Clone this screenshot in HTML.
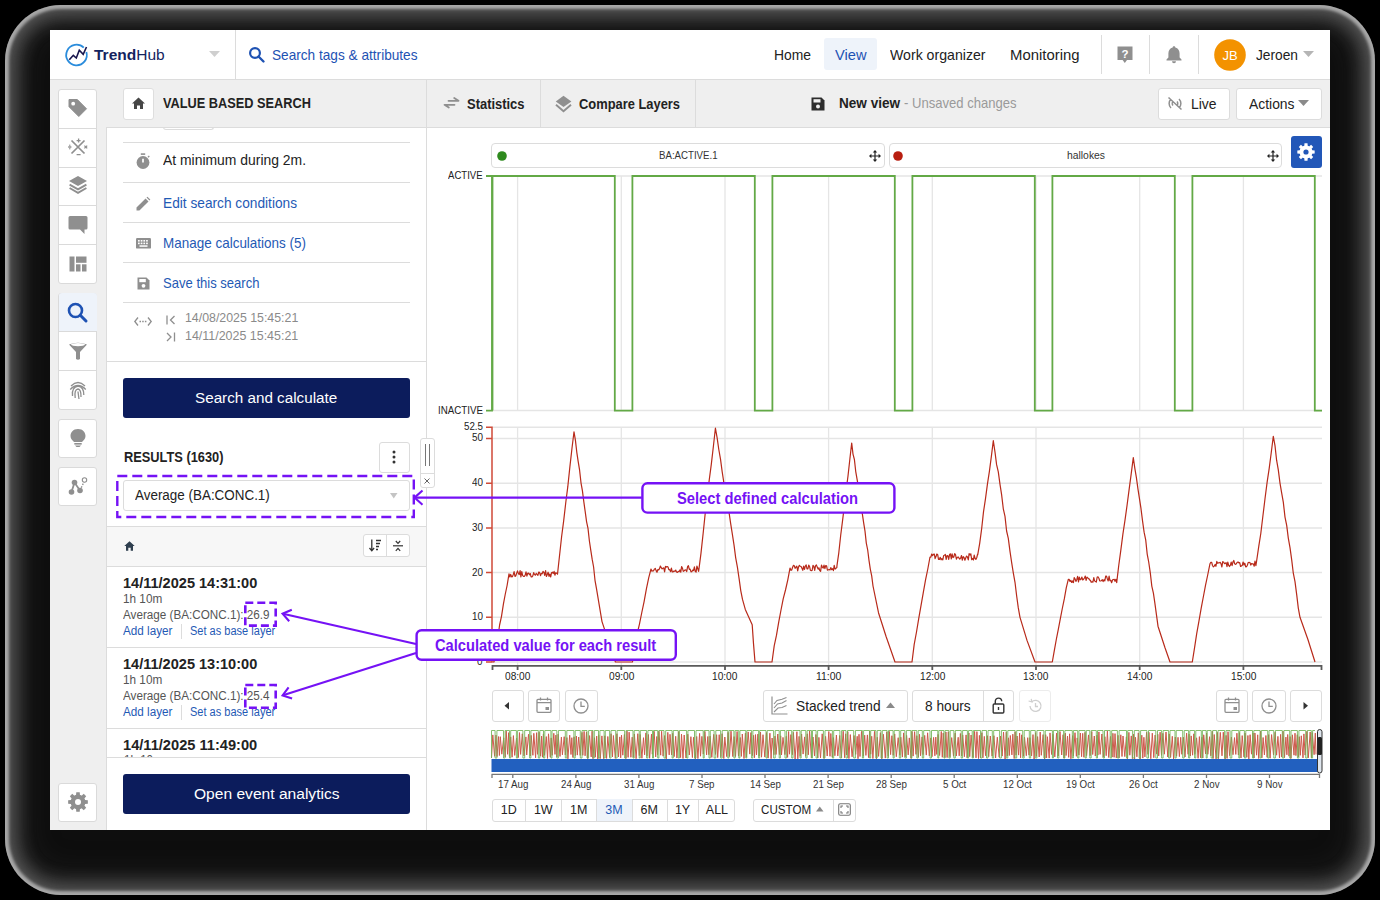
<!DOCTYPE html><html><head><meta charset="utf-8"><style>
*{box-sizing:border-box;margin:0;padding:0}
html,body{width:1380px;height:900px;overflow:hidden;background:#000;font-family:"Liberation Sans",sans-serif;color:#222;position:relative}
#shadow{position:absolute;left:5px;top:5px;width:1370px;height:890px;border-radius:56px;background:#0e0e0e;box-shadow:inset 0 0 3px 4px rgba(225,225,225,.6), inset 0 0 18px 12px rgba(150,150,150,.48), inset 0 0 34px 16px rgba(70,70,70,.35)}
#win{position:absolute;left:50px;top:30px;width:1280px;height:800px;background:#efefef}
.r{position:absolute}
.t{position:absolute;white-space:nowrap;line-height:1;transform-origin:0 0}
.bx{position:absolute;background:#fff;border:1px solid #dcdcdc;border-radius:3px}
svg{position:absolute;overflow:visible}
</style></head><body><div id="shadow"></div><div id="win"></div><div class="r" style="left:50px;top:30px;width:1280px;height:49px;background:#fff"></div>
<div class="r" style="left:50px;top:79px;width:1280px;height:1px;background:#dcdcdc"></div>
<div class="r" style="left:235px;top:30px;width:1px;height:49px;background:#dcdcdc"></div>
<svg style="left:64px;top:43px" width="26" height="26" viewBox="0 0 26 26"><path d="M22.35 8.99 A10.3 10.3 0 1 1 19.78 4.72" fill="none" stroke="#2a8cdc" stroke-width="1.8"/><path d="M5.3 16.8 L9.3 12.3 L12.3 15 L15.3 7.3 L19.2 11.3 L22.5 4" fill="none" stroke="#16144c" stroke-width="1.6" stroke-linejoin="miter"/></svg>
<div class="t" style="left:94px;top:46.88px;font-size:15.5px;color:#14235e;"><b>Trend</b>Hub</div>
<svg style="left:209px;top:51px" width="12" height="7" viewBox="0 0 12 7"><path d="M0 0 L11 0 L5.5 6 Z" fill="#cfcfcf"/></svg>
<svg style="left:249px;top:47px" width="17" height="16" viewBox="0 0 17 16"><circle cx="6" cy="6" r="4.9" fill="none" stroke="#1e52b3" stroke-width="2.2"/><path d="M9.5 9.5 L14.5 14.5" stroke="#1e52b3" stroke-width="2.4" stroke-linecap="round"/></svg>
<div class="t" style="left:271.5px;top:47.73px;font-size:14.5px;color:#1e52b3;transform:scaleX(0.9403);">Search tags &amp; attributes</div>
<div class="t" style="left:773.5px;top:47.53px;font-size:14.5px;color:#222;transform:scaleX(0.9567);">Home</div>
<div class="r" style="left:824px;top:38px;width:53px;height:32px;background:#eef3fa;border-radius:3px"></div>
<div class="t" style="left:835px;top:47.53px;font-size:14.5px;color:#1e52b3;transform:scaleX(1.0107);">View</div>
<div class="t" style="left:890px;top:47.53px;font-size:14.5px;color:#222;transform:scaleX(0.9741);">Work organizer</div>
<div class="t" style="left:1009.6px;top:47.53px;font-size:14.5px;color:#222;transform:scaleX(1.0267);">Monitoring</div>
<div class="r" style="left:1101px;top:35px;width:1px;height:39px;background:#dcdcdc"></div>
<div class="r" style="left:1149px;top:35px;width:1px;height:39px;background:#dcdcdc"></div>
<div class="r" style="left:1198px;top:35px;width:1px;height:39px;background:#dcdcdc"></div>
<svg style="left:1116px;top:46px" width="18" height="18" viewBox="0 0 18 18"><path d="M1.5 0.5 H16.5 V14 H11 L8.8 17 L6.6 14 H1.5 Z" fill="#8f8f8f"/><text x="9" y="12.3" font-size="11.5" font-weight="bold" text-anchor="middle" fill="#fff" font-family="Liberation Sans">?</text></svg>
<svg style="left:1165px;top:45px" width="18" height="19" viewBox="0 0 18 19"><path d="M9 1.2 C9.8 1.2 10.3 1.7 10.3 2.4 C13.2 3.1 14.6 5.6 14.6 8.5 V12.5 L16.5 14.6 V15.4 H1.5 V14.6 L3.4 12.5 V8.5 C3.4 5.6 4.8 3.1 7.7 2.4 C7.7 1.7 8.2 1.2 9 1.2 Z" fill="#8f8f8f"/><path d="M7 16.3 H11 A2 2 0 0 1 7 16.3 Z" fill="#8f8f8f"/></svg>
<svg style="left:1214px;top:39px" width="32" height="32" viewBox="0 0 32 32"><circle cx="16" cy="16" r="15.8" fill="#f39200"/><text x="16" y="21" font-size="13" text-anchor="middle" fill="#fff" font-family="Liberation Sans">JB</text></svg>
<div class="t" style="left:1256px;top:47.53px;font-size:14.5px;color:#222;transform:scaleX(0.9474);">Jeroen</div>
<svg style="left:1303px;top:51px" width="12" height="7" viewBox="0 0 12 7"><path d="M0 0 L11 0 L5.5 6 Z" fill="#b5b5b5"/></svg>
<div class="r" style="left:107px;top:127px;width:1223px;height:1px;background:#dcdcdc"></div>
<div class="r" style="left:122.5px;top:88px;width:31.2px;height:31.5px;background:#fff;border:1px solid #dedede;border-radius:3px;"></div>
<svg style="left:131px;top:96px" width="15" height="14" viewBox="0 0 15 14"><path d="M7.5 1.5 L14 7.5 H12 V13 H9 V9.5 H6 V13 H3 V7.5 H1 Z" fill="#474747"/></svg>
<div class="t" style="left:163px;top:95.16px;font-size:15.4px;color:#222;font-weight:bold;transform:scaleX(0.8289);">VALUE BASED SEARCH</div>
<div class="r" style="left:426px;top:79px;width:1px;height:751px;background:#dcdcdc"></div>
<div class="r" style="left:539.5px;top:79px;width:1px;height:48px;background:#dcdcdc"></div>
<div class="r" style="left:695px;top:79px;width:1px;height:48px;background:#dcdcdc"></div>
<svg style="left:442.5px;top:95px" width="18" height="15" viewBox="0 0 18 15"><path d="M5.5 5.8 H15.5 L11.2 3 M11.5 9.8 H1.5 L5.8 12.6" fill="none" stroke="#8f8f8f" stroke-width="1.8" stroke-linejoin="round" stroke-linecap="round"/></svg>
<div class="t" style="left:467px;top:97.13px;font-size:14.5px;color:#222;font-weight:bold;transform:scaleX(0.8919);">Statistics</div>
<svg style="left:555px;top:95px" width="17" height="17" viewBox="0 0 17 17"><path d="M8.5 0.8 L16.4 6.6 L8.5 12.1 L0.8 6.6 Z" fill="#8f8f8f"/><path d="M1 9.7 L8.5 16.3 L16 9.7" fill="none" stroke="#8f8f8f" stroke-width="1.9"/></svg>
<div class="t" style="left:579px;top:97.13px;font-size:14.5px;color:#222;font-weight:bold;transform:scaleX(0.8888);">Compare Layers</div>
<svg style="left:811px;top:97px" width="14" height="14" viewBox="0 0 14 14"><path d="M0.5 0.5 H10.5 L13.5 3.5 V13.5 H0.5 Z" fill="#2d2d2d"/><rect x="2.5" y="2.2" width="7" height="3.3" fill="#efefef"/><circle cx="7" cy="9.5" r="2" fill="#efefef"/></svg>
<div class="t" style="left:838.5px;top:95.53px;font-size:14.5px;color:#222;font-weight:bold;transform:scaleX(0.9345);">New view</div>
<div class="t" style="left:904px;top:95.53px;font-size:14.5px;color:#9a9a9a;transform:scaleX(0.9005);">- Unsaved changes</div>
<div class="r" style="left:1158px;top:88px;width:72px;height:32px;background:#fff;border:1px solid #dcdcdc;border-radius:3px;"></div>
<svg style="left:1167px;top:96px" width="16" height="15" viewBox="0 0 16 15"><path d="M4 3 C1.5 5.5 1.5 9.5 4 12 M12 3 C14.5 5.5 14.5 9.5 12 12 M6 5.5 C5 6.5 5 8.5 6 9.5 M10 5.5 C11 6.5 11 8.5 10 9.5 M1.5 1.5 L14.5 13.5" fill="none" stroke="#8f8f8f" stroke-width="1.5"/></svg>
<div class="t" style="left:1191px;top:96.53px;font-size:14.5px;color:#222;transform:scaleX(0.9587);">Live</div>
<div class="r" style="left:1236px;top:88px;width:85.5px;height:32px;background:#fff;border:1px solid #dcdcdc;border-radius:3px;"></div>
<div class="t" style="left:1249px;top:96.53px;font-size:14.5px;color:#222;transform:scaleX(0.9569);">Actions</div>
<svg style="left:1298px;top:100px" width="12" height="7" viewBox="0 0 12 7"><path d="M0 0 L11 0 L5.5 6 Z" fill="#8a8a8a"/></svg>
<div class="r" style="left:58px;top:89px;width:39.3px;height:195.0px;background:#fff;border:1px solid #dadada;border-radius:3px;"></div>
<div class="r" style="left:59px;top:127.8px;width:38px;height:1px;background:#dadada"></div>
<div class="r" style="left:59px;top:166.6px;width:38px;height:1px;background:#dadada"></div>
<div class="r" style="left:59px;top:205.39999999999998px;width:38px;height:1px;background:#dadada"></div>
<div class="r" style="left:59px;top:244.2px;width:38px;height:1px;background:#dadada"></div>
<div class="r" style="left:58px;top:292.5px;width:39.3px;height:117.39999999999999px;background:#fff;border:1px solid #dadada;border-radius:3px;"></div>
<div class="r" style="left:59px;top:331.3px;width:38px;height:1px;background:#dadada"></div>
<div class="r" style="left:59px;top:370.1px;width:38px;height:1px;background:#dadada"></div>
<div class="r" style="left:58px;top:418.5px;width:39.3px;height:39.8px;background:#fff;border:1px solid #dadada;border-radius:3px;"></div>
<div class="r" style="left:58px;top:466.5px;width:39.3px;height:39.8px;background:#fff;border:1px solid #dadada;border-radius:3px;"></div>
<div class="r" style="left:58px;top:782.5px;width:39.3px;height:39.8px;background:#fff;border:1px solid #dadada;border-radius:3px;"></div>
<svg style="left:68px;top:98px" width="20" height="20" viewBox="0 0 20 20"><path d="M1 1.5 H9.3 L18.5 10.8 L10.8 18.5 L1 8.7 Z" fill="#8f8f8f" stroke="#8f8f8f" stroke-width="1" stroke-linejoin="round"/><circle cx="5.2" cy="5.7" r="1.9" fill="#fff"/></svg>
<svg style="left:68px;top:137px" width="20" height="20" viewBox="0 0 20 20"><path d="M3.5 3.5 L16.5 16.5 M16.5 3.5 L3.5 16.5" stroke="#8f8f8f" stroke-width="1.7"/><path d="M10.6 1.6 V5.6 M8.6 3.6 H12.6 M8.6 17.6 H12.6 M0.2 10 H3.4 M16.4 8.6 L19.2 11.4 M19.2 8.6 L16.4 11.4" stroke="#8f8f8f" stroke-width="1.3"/><circle cx="1.8" cy="8.3" r=".7" fill="#8f8f8f"/><circle cx="1.8" cy="11.7" r=".7" fill="#8f8f8f"/></svg>
<svg style="left:68px;top:175px" width="20" height="20" viewBox="0 0 20 20"><path d="M10 1 L19 6 L10 11 L1 6 Z" fill="#8f8f8f"/><path d="M1.6 9.6 L10 14.4 L18.4 9.6 M1.6 13 L10 17.8 L18.4 13" fill="none" stroke="#8f8f8f" stroke-width="1.9"/></svg>
<svg style="left:67px;top:214px" width="22" height="22" viewBox="0 0 22 22"><path d="M3 2 H19 Q20.5 2 20.5 3.5 V14 Q20.5 15.5 19 15.5 H17.5 V20 L13 15.5 H3 Q1.5 15.5 1.5 14 V3.5 Q1.5 2 3 2 Z" fill="#8f8f8f"/></svg>
<svg style="left:68px;top:254px" width="20" height="20" viewBox="0 0 20 20"><rect x="1.5" y="2.5" width="5" height="15" fill="#8f8f8f"/><rect x="8" y="2.5" width="10.5" height="6.3" fill="#8f8f8f"/><rect x="8" y="10.3" width="4.5" height="7.2" fill="#8f8f8f"/><rect x="14" y="10.3" width="4.5" height="7.2" fill="#8f8f8f"/></svg>
<div class="r" style="left:59px;top:293px;width:38px;height:38px;background:#eef3fa;border-radius:3px 3px 0 0"></div>
<svg style="left:67px;top:302px" width="22" height="22" viewBox="0 0 22 22"><circle cx="8.5" cy="8.5" r="6.5" fill="none" stroke="#1e52b3" stroke-width="2.6"/><path d="M13.3 13.3 L19 19" stroke="#1e52b3" stroke-width="3" stroke-linecap="round"/></svg>
<svg style="left:68px;top:341px" width="20" height="20" viewBox="0 0 20 20"><path d="M1 3.5 Q10 0 19 3.5 L12 11 V18 Q10 19.5 8 18 V11 Z" fill="#8f8f8f"/><ellipse cx="10" cy="3.6" rx="7" ry="1.6" fill="#fff"/></svg>
<svg style="left:68px;top:380px" width="20" height="20" viewBox="0 0 20 20"><g fill="none" stroke="#8f8f8f" stroke-width="1.3"><path d="M3 6 Q10 -1 17 6"/><path d="M2.2 9.5 Q10 1.5 17.8 9.5"/><path d="M4.5 16 Q3.5 7 10 6 Q16 7 15.8 15"/><path d="M7.2 18 Q6 9.5 10 9 Q13.2 9.5 13 17"/><path d="M10 11.5 Q10.5 16 11 19"/></g></svg>
<svg style="left:68px;top:428px" width="20" height="20" viewBox="0 0 20 20"><path d="M10 1 C5 1 2.5 4.5 2.5 8 C2.5 11 4.5 12.5 6 14 H14 C15.5 12.5 17.5 11 17.5 8 C17.5 4.5 15 1 10 1 Z" fill="#8f8f8f"/><rect x="6.3" y="15" width="7.4" height="1.6" fill="#8f8f8f"/><path d="M7 17.5 H13 L11.5 19 H8.5 Z" fill="#8f8f8f"/></svg>
<svg style="left:68px;top:476px" width="20" height="20" viewBox="0 0 20 20"><path d="M3.5 16 L6.5 6.5 L12 14.5" fill="none" stroke="#8f8f8f" stroke-width="1.8"/><path d="M12 14.5 L16 6" fill="none" stroke="#8f8f8f" stroke-width="1.3" stroke-dasharray="1.6 1.4"/><circle cx="3.5" cy="16" r="2.8" fill="#8f8f8f"/><circle cx="6.5" cy="6.5" r="2.8" fill="#8f8f8f"/><circle cx="12" cy="14.5" r="2.8" fill="#8f8f8f"/><circle cx="16.5" cy="4" r="2.2" fill="#fff" stroke="#8f8f8f" stroke-width="1.1"/></svg>
<svg style="left:67px;top:791px" width="22" height="22" viewBox="0 0 22 22"><polygon points="18.04,9.05 20.85,9.28 20.85,12.72 18.04,12.95 17.35,14.60 19.18,16.75 16.75,19.18 14.60,17.35 12.95,18.04 12.72,20.85 9.28,20.85 9.05,18.04 7.40,17.35 5.25,19.18 2.82,16.75 4.65,14.60 3.96,12.95 1.15,12.72 1.15,9.28 3.96,9.05 4.65,7.40 2.82,5.25 5.25,2.82 7.40,4.65 9.05,3.96 9.28,1.15 12.72,1.15 12.95,3.96 14.60,4.65 16.75,2.82 19.18,5.25 17.35,7.40" fill="#8f8f8f"/><circle cx="11" cy="11" r="7.15" fill="#8f8f8f"/><circle cx="11" cy="11" r="3" fill="#fff"/></svg>
<div class="r" style="left:107px;top:128px;width:319px;height:702px;background:#fff"></div>
<div class="r" style="left:106px;top:127px;width:1px;height:703px;background:#dcdcdc"></div>
<div class="r" style="left:163px;top:127px;width:51px;height:3px;border:1px solid #dcdcdc;border-top:none;border-radius:0 0 3px 3px"></div>
<div class="r" style="left:123px;top:142px;width:287px;height:1px;background:#dcdcdc"></div>
<div class="r" style="left:123px;top:182px;width:287px;height:1px;background:#dcdcdc"></div>
<div class="r" style="left:123px;top:222px;width:287px;height:1px;background:#dcdcdc"></div>
<div class="r" style="left:123px;top:262px;width:287px;height:1px;background:#dcdcdc"></div>
<div class="r" style="left:123px;top:302px;width:287px;height:1px;background:#dcdcdc"></div>
<svg style="left:136px;top:153px" width="14" height="16" viewBox="0 0 14 16"><rect x="4.8" y="0.3" width="4.4" height="1.6" fill="#8f8f8f"/><circle cx="7" cy="9.5" r="6.4" fill="#8f8f8f"/><path d="M12 4.3 L13.3 3" stroke="#8f8f8f" stroke-width="1.3"/><path d="M7 5.8 V9.6" stroke="#fff" stroke-width="1.7"/></svg>
<div class="t" style="left:163px;top:152.73px;font-size:14.5px;color:#222;transform:scaleX(0.9593);">At minimum during 2m.</div>
<svg style="left:136px;top:197px" width="14" height="14" viewBox="0 0 14 14"><path d="M0.5 13.5 V10.6 L9.6 1.5 L12.5 4.4 L3.4 13.5 Z" fill="#8f8f8f"/><path d="M10.5 0.6 L11.4 -0.3 L14.3 2.6 L13.4 3.5 Z" fill="#8f8f8f"/></svg>
<div class="t" style="left:163.3px;top:195.53px;font-size:14.5px;color:#1f5ab5;transform:scaleX(0.9447);">Edit search conditions</div>
<svg style="left:135.5px;top:238px" width="15" height="11" viewBox="0 0 15 11"><rect x="0" y="0" width="15" height="10.6" rx="1.2" fill="#8f8f8f"/><g fill="#fff"><rect x="2" y="2" width="1.7" height="1.6"/><rect x="4.7" y="2" width="1.7" height="1.6"/><rect x="7.4" y="2" width="1.7" height="1.6"/><rect x="10.1" y="2" width="1.7" height="1.6"/><rect x="2" y="4.6" width="1.7" height="1.6"/><rect x="4.7" y="4.6" width="1.7" height="1.6"/><rect x="7.4" y="4.6" width="1.7" height="1.6"/><rect x="10.1" y="4.6" width="1.7" height="1.6"/><rect x="3.5" y="7.3" width="8" height="1.5"/></g></svg>
<div class="t" style="left:163.3px;top:235.73px;font-size:14.5px;color:#1f5ab5;transform:scaleX(0.9290);">Manage calculations (5)</div>
<svg style="left:136.5px;top:277px" width="13" height="13" viewBox="0 0 13 13"><path d="M0.5 0.5 H9.5 L12.5 3.5 V12.5 H0.5 Z" fill="#8f8f8f"/><rect x="2.3" y="2" width="6.5" height="3.2" fill="#fff"/><circle cx="6.5" cy="8.8" r="1.9" fill="#fff"/></svg>
<div class="t" style="left:163.3px;top:276.03px;font-size:14.5px;color:#1f5ab5;transform:scaleX(0.9003);">Save this search</div>
<svg style="left:134px;top:316px" width="18" height="11" viewBox="0 0 18 11"><path d="M4 1.5 L0.8 5.5 L4 9.5 M14 1.5 L17.2 5.5 L14 9.5" fill="none" stroke="#8f8f8f" stroke-width="1.3"/><path d="M5.5 5.5 H12.5" stroke="#8f8f8f" stroke-width="1.3" stroke-dasharray="1.5 1.2"/></svg>
<svg style="left:166px;top:315px" width="10" height="10" viewBox="0 0 10 10"><path d="M1 0.5 V9.5 M8.5 1 L4.5 5 L8.5 9" fill="none" stroke="#8f8f8f" stroke-width="1.3"/></svg>
<svg style="left:166px;top:332px" width="10" height="10" viewBox="0 0 10 10"><path d="M8.5 0.5 V9.5 M1 1 L5 5 L1 9" fill="none" stroke="#8f8f8f" stroke-width="1.3"/></svg>
<div class="t" style="left:184.7px;top:312.33px;font-size:12.6px;color:#8a8a8a;transform:scaleX(0.9801);">14/08/2025 15:45:21</div>
<div class="t" style="left:184.7px;top:329.63px;font-size:12.6px;color:#8a8a8a;transform:scaleX(0.9881);">14/11/2025 15:45:21</div>
<div class="r" style="left:107px;top:361px;width:319px;height:1px;background:#dcdcdc"></div>
<div class="r" style="left:123px;top:378px;width:287px;height:40px;background:#0c1c5c;border-radius:3px"></div>
<div class="t" style="left:195.3px;top:390.48px;font-size:15.5px;color:#fff;transform:scaleX(0.9824);">Search and calculate</div>
<div class="t" style="left:123.5px;top:450.03px;font-size:14.5px;color:#222;font-weight:bold;transform:scaleX(0.8842);">RESULTS (1630)</div>
<div class="r" style="left:378.5px;top:441.5px;width:31.5px;height:31px;background:#fff;border:1px solid #dcdcdc;border-radius:3px;"></div>
<svg style="left:392px;top:450px" width="4" height="14" viewBox="0 0 4 14"><circle cx="2" cy="2" r="1.5" fill="#333"/><circle cx="2" cy="7" r="1.5" fill="#333"/><circle cx="2" cy="12" r="1.5" fill="#333"/></svg>
<div class="r" style="left:123.2px;top:480.2px;width:286.5px;height:31.2px;background:#fff;border:1px solid #dcdcdc;border-radius:3px;"></div>
<div class="t" style="left:134.8px;top:488.05px;font-size:14px;color:#222;transform:scaleX(0.9590);">Average (BA:CONC.1)</div>
<svg style="left:390px;top:493px" width="8" height="6" viewBox="0 0 8 6"><path d="M0 0 H7.5 L3.75 5.5 Z" fill="#c4c4c4"/></svg>
<div class="r" style="left:107px;top:526px;width:319px;height:41px;background:#f7f7f7;border-top:1px solid #dcdcdc;border-bottom:1px solid #dcdcdc"></div>
<svg style="left:123.5px;top:541px" width="11" height="10" viewBox="0 0 11 10"><path d="M5.5 0.3 L10.7 5 H9 V9.7 H6.7 V6.7 H4.3 V9.7 H2 V5 H0.3 Z" fill="#2f3f4f"/></svg>
<div class="r" style="left:363.2px;top:534.4px;width:46.5px;height:23px;background:#fff;border:1px solid #dcdcdc;border-radius:3px;"></div>
<div class="r" style="left:386px;top:535px;width:1px;height:22px;background:#dcdcdc"></div>
<svg style="left:369px;top:539px" width="13" height="13" viewBox="0 0 13 13"><path d="M2.8 0.5 V11.5 M0.5 9 L2.8 11.8 L5.1 9" fill="none" stroke="#333" stroke-width="1.3"/><path d="M7 1.5 H12 M7 4.5 H11 M7 7.5 H10 M7 10.5 H9" stroke="#333" stroke-width="1.3"/></svg>
<svg style="left:392px;top:540px" width="12" height="12" viewBox="0 0 12 12"><path d="M1 5.8 H11" stroke="#333" stroke-width="1.2"/><path d="M3.8 1 L6 3.4 L8.2 1 M3.8 10.8 L6 8.4 L8.2 10.8" fill="none" stroke="#333" stroke-width="1.2"/></svg>
<div class="t" style="left:122.8px;top:575.65px;font-size:14px;color:#222;font-weight:bold;transform:scaleX(1.0386);">14/11/2025 14:31:00</div>
<div class="t" style="left:122.8px;top:593.12px;font-size:12.5px;color:#555;transform:scaleX(0.9403);">1h 10m</div>
<div class="t" style="left:122.8px;top:608.82px;font-size:12.5px;color:#555;transform:scaleX(0.9351);">Average (BA:CONC.1): 26.9</div>
<div class="t" style="left:122.8px;top:625.32px;font-size:12.5px;color:#1f5ab5;transform:scaleX(0.9355);">Add layer</div>
<div class="r" style="left:181px;top:623.5px;width:1px;height:15.0px;background:#dcdcdc"></div>
<div class="t" style="left:190px;top:625.32px;font-size:12.5px;color:#1f5ab5;transform:scaleX(0.8822);">Set as base layer</div>
<div class="r" style="left:107px;top:647px;width:319px;height:1px;background:#dcdcdc"></div>
<div class="t" style="left:122.8px;top:656.75px;font-size:14px;color:#222;font-weight:bold;transform:scaleX(1.0386);">14/11/2025 13:10:00</div>
<div class="t" style="left:122.8px;top:674.22px;font-size:12.5px;color:#555;transform:scaleX(0.9403);">1h 10m</div>
<div class="t" style="left:122.8px;top:689.92px;font-size:12.5px;color:#555;transform:scaleX(0.9351);">Average (BA:CONC.1): 25.4</div>
<div class="t" style="left:122.8px;top:706.42px;font-size:12.5px;color:#1f5ab5;transform:scaleX(0.9355);">Add layer</div>
<div class="r" style="left:181px;top:704.6px;width:1px;height:15.0px;background:#dcdcdc"></div>
<div class="t" style="left:190px;top:706.42px;font-size:12.5px;color:#1f5ab5;transform:scaleX(0.8822);">Set as base layer</div>
<div class="r" style="left:107px;top:728px;width:319px;height:1px;background:#dcdcdc"></div>
<div class="t" style="left:122.8px;top:737.65px;font-size:14px;color:#222;font-weight:bold;transform:scaleX(1.0448);">14/11/2025 11:49:00</div>
<div class="t" style="left:123.5px;top:754.42px;font-size:12.5px;color:#555;transform:scaleX(0.9283);clip-path:inset(0 0 7px 0)">1h 10m</div>
<div class="r" style="left:107px;top:757px;width:319px;height:73px;background:#fff;border-top:1px solid #dcdcdc"></div>
<div class="r" style="left:123px;top:774px;width:287px;height:40px;background:#0c1c5c;border-radius:3px"></div>
<div class="t" style="left:193.6px;top:786.38px;font-size:15.5px;color:#fff;transform:scaleX(1.0052);">Open event analytics</div>
<div class="r" style="left:427px;top:128px;width:903px;height:702px;background:#fff"></div>
<div class="r" style="left:419.5px;top:437.5px;width:15px;height:50px;background:#fff;border:1px solid #dcdcdc;border-radius:3px;"></div>
<div class="r" style="left:420px;top:472.5px;width:14px;height:1px;background:#dcdcdc"></div>
<div class="r" style="left:425px;top:444px;width:1px;height:22px;background:#777"></div>
<div class="r" style="left:428.5px;top:444px;width:1px;height:22px;background:#777"></div>
<svg style="left:423.5px;top:477.5px" width="6" height="6" viewBox="0 0 6 6"><path d="M0.5 0.5 L5.5 5.5 M5.5 0.5 L0.5 5.5" stroke="#666" stroke-width="1"/></svg>
<div class="r" style="left:1290.5px;top:136px;width:31.5px;height:31.7px;background:#2257b8;border-radius:3px"></div>
<svg style="left:1296px;top:142px" width="20" height="20" viewBox="0 0 20 20"><polygon points="16.17,8.29 18.67,8.49 18.67,11.51 16.17,11.71 15.57,13.15 17.20,15.06 15.06,17.20 13.15,15.57 11.71,16.17 11.51,18.67 8.49,18.67 8.29,16.17 6.85,15.57 4.94,17.20 2.80,15.06 4.43,13.15 3.83,11.71 1.33,11.51 1.33,8.49 3.83,8.29 4.43,6.85 2.80,4.94 4.94,2.80 6.85,4.43 8.29,3.83 8.49,1.33 11.51,1.33 11.71,3.83 13.15,4.43 15.06,2.80 17.20,4.94 15.57,6.85" fill="#fff"/><circle cx="10" cy="10" r="6.27" fill="#fff"/><circle cx="10" cy="10" r="2.6" fill="#2257b8"/></svg>
<div class="r" style="left:491.4px;top:143px;width:393.6px;height:24.8px;background:#fff;border:1px solid #dcdcdc;border-radius:4px;"></div>
<svg style="left:496.5px;top:150.5px" width="10" height="10" viewBox="0 0 10 10"><circle cx="5" cy="5" r="4.8" fill="#2e8a1e"/></svg>
<div class="t" style="left:658.95px;top:150.07px;font-size:11.5px;color:#333;transform:scaleX(0.8398);">BA:ACTIVE.1</div>
<svg style="left:869px;top:150px" width="12" height="12" viewBox="0 0 12 12"><path d="M6 1 V11 M1 6 H11" stroke="#222" stroke-width="1.2"/><path d="M6 0 L8.2 2.4 H3.8 Z M6 12 L8.2 9.6 H3.8 Z M0 6 L2.4 3.8 V8.2 Z M12 6 L9.6 3.8 V8.2 Z" fill="#222"/></svg>
<div class="r" style="left:889px;top:143px;width:393.3px;height:24.8px;background:#fff;border:1px solid #dcdcdc;border-radius:4px;"></div>
<svg style="left:893px;top:150.5px" width="10" height="10" viewBox="0 0 10 10"><circle cx="5" cy="5" r="4.8" fill="#b81e10"/></svg>
<div class="t" style="left:1066.5px;top:150.07px;font-size:11.5px;color:#333;transform:scaleX(0.9007);">hallokes</div>
<svg style="left:1266.8px;top:150px" width="12" height="12" viewBox="0 0 12 12"><path d="M6 1 V11 M1 6 H11" stroke="#222" stroke-width="1.2"/><path d="M6 0 L8.2 2.4 H3.8 Z M6 12 L8.2 9.6 H3.8 Z M0 6 L2.4 3.8 V8.2 Z M12 6 L9.6 3.8 V8.2 Z" fill="#222"/></svg>
<svg style="left:0;top:0" width="1380" height="900" viewBox="0 0 1380 900"><path d="M491.5 176 H1322 M491.5 410.6 H1322" stroke="#e5e5e5" stroke-width="1.5"/><path d="M517.6 176 V410.6" stroke="#e5e5e5" stroke-width="1.3"/><path d="M621.3 176 V410.6" stroke="#e5e5e5" stroke-width="1.3"/><path d="M725.0 176 V410.6" stroke="#e5e5e5" stroke-width="1.3"/><path d="M828.6 176 V410.6" stroke="#e5e5e5" stroke-width="1.3"/><path d="M932.3 176 V410.6" stroke="#e5e5e5" stroke-width="1.3"/><path d="M1036.0 176 V410.6" stroke="#e5e5e5" stroke-width="1.3"/><path d="M1139.7 176 V410.6" stroke="#e5e5e5" stroke-width="1.3"/><path d="M1243.4 176 V410.6" stroke="#e5e5e5" stroke-width="1.3"/><path d="M491.5 427.3 H1322" stroke="#e5e5e5" stroke-width="1.5"/><path d="M491.5 438.5 H1322" stroke="#e5e5e5" stroke-width="1.5"/><path d="M491.5 483.2 H1322" stroke="#e5e5e5" stroke-width="1.5"/><path d="M491.5 527.9 H1322" stroke="#e5e5e5" stroke-width="1.5"/><path d="M491.5 572.6 H1322" stroke="#e5e5e5" stroke-width="1.5"/><path d="M491.5 617.3 H1322" stroke="#e5e5e5" stroke-width="1.5"/><path d="M491.5 662.0 H1322" stroke="#e5e5e5" stroke-width="1.5"/><path d="M517.6 427 V665" stroke="#e5e5e5" stroke-width="1.3"/><path d="M621.3 427 V665" stroke="#e5e5e5" stroke-width="1.3"/><path d="M725.0 427 V665" stroke="#e5e5e5" stroke-width="1.3"/><path d="M828.6 427 V665" stroke="#e5e5e5" stroke-width="1.3"/><path d="M932.3 427 V665" stroke="#e5e5e5" stroke-width="1.3"/><path d="M1036.0 427 V665" stroke="#e5e5e5" stroke-width="1.3"/><path d="M1139.7 427 V665" stroke="#e5e5e5" stroke-width="1.3"/><path d="M1243.4 427 V665" stroke="#e5e5e5" stroke-width="1.3"/><path d="M492.5 410.6 V176 H614.8 V410.6 H632.4 V176 H754.8 V410.6 H772.4 V176 H894.8 V410.6 H912.4 V176 H1034.8 V410.6 H1052.3999999999999 V176 H1174.8 V410.6 H1192.3999999999999 V176 H1314.8 V410.6 H1322" fill="none" stroke="#63a946" stroke-width="1.8"/><path d="M492.0 175 V411.6 M486 176 H492.5 M486 410.6 H492.5" stroke="#63a946" stroke-width="1.8"/><path d="M492.5 662.0 L494.0 662.0 L495.9 649.1 L497.8 638.0 L499.6 625.0 L501.5 616.3 L503.4 604.2 L505.2 594.5 L507.1 585.5 L509.0 573.9 L509.9 577.0 L510.7 574.4 L511.6 576.8 L512.4 576.7 L513.3 574.4 L514.1 571.7 L515.0 576.5 L515.8 575.8 L516.7 573.1 L517.5 570.9 L518.4 573.4 L519.2 574.6 L520.1 570.7 L520.9 577.0 L521.8 571.5 L522.6 575.4 L523.5 576.3 L524.3 576.5 L525.2 575.2 L526.0 571.8 L526.9 576.1 L527.7 573.4 L528.6 573.0 L529.4 574.8 L530.3 573.6 L531.1 576.9 L532.0 576.9 L532.8 575.9 L533.7 572.7 L534.5 574.4 L535.4 575.2 L536.2 573.4 L537.1 574.3 L537.9 575.3 L538.8 572.0 L539.6 572.6 L540.5 575.7 L541.3 573.4 L542.2 573.8 L543.0 571.4 L543.9 572.4 L544.7 575.4 L545.6 570.7 L546.4 576.5 L547.3 574.5 L548.1 572.2 L549.0 576.3 L549.8 574.0 L550.7 577.0 L551.5 572.8 L552.4 572.2 L553.2 573.5 L554.1 571.4 L554.9 575.2 L555.8 572.6 L556.6 573.3 L557.5 573.4 L557.5 574.2 L559.6 555.0 L561.6 536.8 L563.7 520.7 L565.8 502.3 L567.8 486.7 L569.9 466.6 L571.9 449.0 L574.0 431.8 L575.4 440.1 L576.8 452.3 L578.2 461.6 L579.6 470.2 L581.0 482.8 L582.4 490.6 L583.8 501.7 L585.2 511.7 L586.6 521.8 L588.0 528.4 L589.4 541.0 L590.8 550.3 L592.2 559.4 L593.6 567.0 L595.0 580.3 L596.4 588.2 L602.0 621.6 L605.4 631.9 L615.4 662.0 L632.5 662.0 L634.8 646.5 L637.1 634.0 L639.4 624.3 L641.8 612.5 L644.1 601.6 L646.4 588.9 L648.7 577.9 L651.0 569.0 L651.9 571.2 L652.7 570.8 L653.6 570.8 L654.4 569.1 L655.3 568.4 L656.1 570.6 L657.0 572.3 L657.8 569.6 L658.7 569.9 L659.5 568.6 L660.4 566.0 L661.2 567.7 L662.1 568.9 L662.9 568.2 L663.8 567.8 L664.6 572.0 L665.5 566.3 L666.3 567.1 L667.2 566.5 L668.0 567.0 L668.9 569.7 L669.7 569.7 L670.6 571.7 L671.4 568.1 L672.3 572.0 L673.1 571.9 L674.0 571.0 L674.8 571.3 L675.7 570.1 L676.5 572.0 L677.4 572.4 L678.2 571.4 L679.1 571.7 L679.9 569.9 L680.8 572.2 L681.6 566.5 L682.5 568.3 L683.3 571.4 L684.2 570.7 L685.0 570.0 L685.9 569.9 L686.7 571.6 L687.6 566.7 L688.4 565.7 L689.3 569.3 L690.1 569.1 L691.0 571.8 L691.8 571.7 L692.7 570.1 L693.5 570.6 L694.4 566.8 L695.2 571.3 L696.1 572.2 L696.9 566.0 L697.8 568.8 L698.6 571.4 L699.0 568.7 L701.0 553.1 L703.1 533.7 L705.1 514.5 L707.2 497.3 L709.2 480.3 L711.3 464.3 L713.4 446.3 L715.4 428.2 L717.1 437.7 L718.8 449.5 L720.5 459.1 L722.2 471.8 L723.9 483.0 L725.6 491.0 L727.3 501.0 L729.0 512.2 L730.6 523.2 L732.3 533.8 L734.0 544.8 L735.7 557.8 L737.4 567.2 L739.1 578.7 L740.8 590.8 L742.5 599.4 L745.3 609.4 L752.2 624.7 L753.5 643.6 L755.0 662.0 L772.0 662.0 L774.2 645.9 L776.5 635.2 L778.8 621.6 L781.0 610.0 L783.2 598.9 L785.5 590.0 L787.8 579.8 L790.0 568.1 L790.9 570.2 L791.7 570.1 L792.6 567.3 L793.4 565.4 L794.3 565.8 L795.1 568.3 L796.0 567.1 L796.8 566.1 L797.7 570.9 L798.5 567.1 L799.4 565.4 L800.2 566.2 L801.1 566.5 L801.9 568.3 L802.8 570.3 L803.6 566.2 L804.5 569.3 L805.3 566.1 L806.2 565.0 L807.0 568.8 L807.9 568.8 L808.7 565.1 L809.6 566.6 L810.4 570.3 L811.3 570.6 L812.1 570.5 L813.0 565.4 L813.8 566.1 L814.7 570.5 L815.5 565.9 L816.4 564.9 L817.2 567.1 L818.1 569.1 L818.9 567.8 L819.8 570.6 L820.6 571.4 L821.5 565.0 L822.3 567.1 L823.2 568.0 L824.0 565.2 L824.9 568.6 L825.7 565.6 L826.6 565.9 L827.4 570.1 L828.3 569.8 L829.1 569.5 L830.0 569.9 L830.8 567.6 L831.7 569.7 L832.5 568.7 L833.4 570.6 L834.2 565.4 L835.1 569.1 L835.9 568.4 L836.8 567.6 L837.0 565.4 L838.8 552.8 L840.7 535.3 L842.5 521.2 L844.4 505.4 L846.2 489.8 L848.0 476.0 L849.9 458.8 L851.7 443.0 L853.0 454.1 L854.4 459.5 L855.7 471.3 L857.0 478.8 L858.4 486.7 L859.7 496.4 L861.0 506.3 L862.4 514.4 L863.7 523.2 L865.0 531.1 L866.3 543.1 L867.7 550.0 L869.0 560.3 L870.3 569.1 L871.7 575.9 L873.0 586.0 L878.5 612.7 L886.0 636.3 L895.0 662.0 L912.0 662.0 L914.2 644.4 L916.5 632.0 L918.8 618.1 L921.0 605.7 L923.2 593.1 L925.5 580.2 L927.8 569.0 L930.0 557.0 L930.9 557.1 L931.7 554.0 L932.6 555.6 L933.4 554.4 L934.3 554.0 L935.1 558.6 L936.0 556.6 L936.8 554.0 L937.7 554.7 L938.5 559.4 L939.4 559.5 L940.2 557.3 L941.1 559.8 L941.9 558.7 L942.8 559.8 L943.6 555.8 L944.5 555.1 L945.3 554.3 L946.2 559.3 L947.0 555.5 L947.9 555.9 L948.7 559.3 L949.6 554.4 L950.4 553.8 L951.3 558.8 L952.1 553.9 L953.0 557.6 L953.8 557.0 L954.7 553.7 L955.5 554.7 L956.4 559.2 L957.2 557.4 L958.1 556.9 L958.9 558.0 L959.8 559.0 L960.6 558.2 L961.5 555.5 L962.3 560.2 L963.2 556.6 L964.0 557.4 L964.9 560.2 L965.7 558.1 L966.6 556.1 L967.4 556.9 L968.3 559.9 L969.1 553.7 L970.0 555.0 L970.8 553.8 L971.7 559.6 L972.5 558.5 L973.4 560.0 L974.2 555.1 L975.1 558.5 L975.9 559.4 L976.8 557.5 L977.6 554.2 L977.7 554.8 L979.7 543.3 L981.6 529.2 L983.5 511.9 L985.5 498.6 L987.5 483.6 L989.4 471.3 L991.3 456.8 L993.3 440.7 L995.0 452.1 L996.6 464.7 L998.3 471.9 L1000.0 484.3 L1001.6 494.6 L1003.3 508.8 L1005.0 516.4 L1006.6 531.0 L1008.3 538.4 L1010.0 551.3 L1011.7 562.8 L1013.3 572.9 L1015.0 582.3 L1016.7 596.3 L1018.3 607.9 L1020.0 617.3 L1027.0 640.4 L1035.0 662.0 L1052.3 662.0 L1054.3 650.7 L1056.3 639.5 L1058.3 629.4 L1060.3 618.8 L1062.3 608.5 L1064.3 598.9 L1066.3 587.7 L1068.3 579.3 L1069.1 579.3 L1070.0 581.5 L1070.8 580.3 L1071.7 582.5 L1072.5 581.0 L1073.4 582.6 L1074.2 577.7 L1075.1 579.0 L1075.9 581.4 L1076.8 579.5 L1077.6 576.4 L1078.5 581.9 L1079.3 577.2 L1080.2 579.8 L1081.0 579.3 L1081.9 577.1 L1082.7 580.0 L1083.6 579.3 L1084.4 578.0 L1085.3 576.1 L1086.1 580.4 L1087.0 577.1 L1087.8 577.9 L1088.7 578.4 L1089.5 579.9 L1090.4 580.3 L1091.2 582.3 L1092.1 581.8 L1092.9 582.2 L1093.8 577.7 L1094.6 580.9 L1095.5 581.6 L1096.3 582.1 L1097.2 577.0 L1098.0 576.8 L1098.9 578.2 L1099.7 580.8 L1100.6 581.0 L1101.4 580.7 L1102.3 579.6 L1103.1 581.6 L1104.0 579.7 L1104.8 580.9 L1105.7 576.2 L1106.5 576.1 L1107.4 579.0 L1108.2 581.0 L1109.1 576.2 L1109.9 580.6 L1110.8 580.3 L1111.6 582.7 L1112.5 580.1 L1113.3 579.5 L1114.2 579.3 L1115.0 581.3 L1115.9 579.3 L1116.7 582.6 L1118.8 565.0 L1120.8 550.4 L1122.9 534.1 L1125.0 520.2 L1127.1 505.0 L1129.2 488.8 L1131.2 473.9 L1133.3 457.7 L1134.8 468.1 L1136.4 477.7 L1137.9 488.6 L1139.5 498.9 L1141.0 508.7 L1142.6 521.4 L1144.1 532.2 L1145.7 539.8 L1147.2 554.1 L1148.7 562.0 L1150.3 572.9 L1151.8 586.1 L1153.4 593.1 L1154.9 603.4 L1156.5 615.1 L1158.0 626.2 L1165.0 647.8 L1170.0 662.0 L1192.3 662.0 L1194.5 648.2 L1196.7 633.7 L1198.9 621.3 L1201.2 608.1 L1203.4 596.5 L1205.6 584.9 L1207.8 574.5 L1210.0 563.7 L1210.8 562.4 L1211.7 562.4 L1212.5 565.5 L1213.4 566.8 L1214.2 566.1 L1215.1 564.6 L1215.9 566.3 L1216.8 561.4 L1217.6 563.3 L1218.5 562.8 L1219.3 562.8 L1220.2 562.4 L1221.0 563.7 L1221.9 567.0 L1222.7 561.7 L1223.6 562.0 L1224.4 563.6 L1225.3 563.4 L1226.1 562.6 L1227.0 566.6 L1227.8 562.1 L1228.7 565.3 L1229.5 566.5 L1230.4 565.2 L1231.2 562.1 L1232.1 565.6 L1232.9 562.1 L1233.8 560.5 L1234.6 563.7 L1235.5 564.4 L1236.3 563.8 L1237.2 562.4 L1238.0 561.9 L1238.9 562.9 L1239.7 562.7 L1240.6 566.5 L1241.4 566.0 L1242.3 565.3 L1243.1 562.0 L1244.0 565.0 L1244.8 563.2 L1245.7 566.9 L1246.5 566.6 L1247.4 565.2 L1248.2 562.5 L1249.1 562.4 L1249.9 562.5 L1250.8 565.1 L1251.6 563.5 L1252.5 563.9 L1253.3 563.9 L1254.2 566.2 L1255.0 561.0 L1255.9 565.7 L1256.7 560.5 L1258.8 546.2 L1260.8 533.5 L1262.9 516.0 L1265.0 498.8 L1267.1 482.4 L1269.2 468.3 L1271.2 453.0 L1273.3 436.3 L1275.0 445.6 L1276.6 460.2 L1278.3 469.8 L1280.0 483.1 L1281.6 492.7 L1283.3 502.1 L1285.0 517.1 L1286.7 525.4 L1288.3 538.1 L1290.0 547.7 L1291.7 559.8 L1293.3 573.2 L1295.0 581.6 L1296.7 594.7 L1298.3 608.1 L1300.0 617.3 L1308.0 639.7 L1315.0 662.0 L1315.0 662.0" fill="none" stroke="#b82a1a" stroke-width="1.2" stroke-linejoin="round"/><path d="M492.0 426.5 V662 M486 427.3 H492.5 M486 438.5 H492.5 M486 483.2 H492.5 M486 527.9 H492.5 M486 572.6 H492.5 M486 617.3 H492.5 M486 662.0 H492.5" stroke="#cf4a38" stroke-width="1.5"/><path d="M492.5 665.8 H1322 M492.5 665 V670 M1321.5 665 V670 M517.6 665 V670 M621.3 665 V670 M725.0 665 V670 M828.6 665 V670 M932.3 665 V670 M1036.0 665 V670 M1139.7 665 V670 M1243.4 665 V670" stroke="#5a5a5a" stroke-width="1.8"/></svg>
<div class="t" style="left:448px;top:170.68px;font-size:10.3px;color:#222;transform:scaleX(0.9300);text-align:right">ACTIVE</div>
<div class="t" style="left:437.7px;top:406.28px;font-size:10.3px;color:#222;transform:scaleX(0.9473);">INACTIVE</div>
<div class="t" style="left:463.6px;top:422.31px;font-size:10.3px;color:#222;transform:scaleX(0.9479);">52.5</div>
<div class="t" style="left:471.6px;top:433.48px;font-size:10.3px;color:#222;transform:scaleX(0.9602);">50</div>
<div class="t" style="left:471.6px;top:478.18px;font-size:10.3px;color:#222;transform:scaleX(0.9602);">40</div>
<div class="t" style="left:471.6px;top:522.88px;font-size:10.3px;color:#222;transform:scaleX(0.9602);">30</div>
<div class="t" style="left:471.6px;top:567.58px;font-size:10.3px;color:#222;transform:scaleX(0.9602);">20</div>
<div class="t" style="left:471.6px;top:612.28px;font-size:10.3px;color:#222;transform:scaleX(0.9602);">10</div>
<div class="t" style="left:477.1px;top:656.98px;font-size:10.3px;color:#222;transform:scaleX(0.9602);">0</div>
<div class="t" style="left:504.90000000000003px;top:671.88px;font-size:10.3px;color:#222;transform:scaleX(0.9855);">08:00</div>
<div class="t" style="left:608.5799999999999px;top:671.88px;font-size:10.3px;color:#222;transform:scaleX(0.9855);">09:00</div>
<div class="t" style="left:712.26px;top:671.88px;font-size:10.3px;color:#222;transform:scaleX(0.9855);">10:00</div>
<div class="t" style="left:815.94px;top:671.88px;font-size:10.3px;color:#222;transform:scaleX(1.0157);">11:00</div>
<div class="t" style="left:919.62px;top:671.88px;font-size:10.3px;color:#222;transform:scaleX(0.9855);">12:00</div>
<div class="t" style="left:1023.3px;top:671.88px;font-size:10.3px;color:#222;transform:scaleX(0.9855);">13:00</div>
<div class="t" style="left:1126.98px;top:671.88px;font-size:10.3px;color:#222;transform:scaleX(0.9855);">14:00</div>
<div class="t" style="left:1230.66px;top:671.88px;font-size:10.3px;color:#222;transform:scaleX(0.9855);">15:00</div>
<div class="r" style="left:492.3px;top:690px;width:31.5px;height:31.7px;background:#fff;border:1px solid #dcdcdc;border-radius:3px;"></div>
<svg style="left:504px;top:702px" width="6" height="8" viewBox="0 0 6 8"><path d="M5 0 V7.5 L0.5 3.75 Z" fill="#333"/></svg>
<div class="r" style="left:528px;top:690px;width:31.5px;height:31.7px;background:#fff;border:1px solid #dcdcdc;border-radius:3px;"></div>
<svg style="left:536px;top:697px" width="16" height="17" viewBox="0 0 16 17"><rect x="1" y="2.3" width="14" height="13" rx="1" fill="none" stroke="#8f8f8f" stroke-width="1.3"/><path d="M1 5.6 H15 M4.5 0.5 V3.5 M11.5 0.5 V3.5" stroke="#8f8f8f" stroke-width="1.3"/><rect x="9.5" y="10" width="3.5" height="3" fill="#8f8f8f"/></svg>
<div class="r" style="left:564.5px;top:690px;width:33px;height:31.7px;background:#fff;border:1px solid #dcdcdc;border-radius:3px;"></div>
<svg style="left:573px;top:698px" width="16" height="16" viewBox="0 0 16 16"><circle cx="8" cy="8" r="7" fill="none" stroke="#8f8f8f" stroke-width="1.3"/><path d="M8 3.6 V8.3 H11.8" fill="none" stroke="#8f8f8f" stroke-width="1.3"/></svg>
<div class="r" style="left:763px;top:690px;width:144.5px;height:31.7px;background:#fff;border:1px solid #dcdcdc;border-radius:3px;"></div>
<svg style="left:771px;top:696px" width="17" height="19" viewBox="0 0 17 19"><path d="M1 0.5 V18 H16.5" fill="none" stroke="#8f8f8f" stroke-width="1.2"/><path d="M3 16 L7 12 L11 11.5 L15.5 9.5 M3 12 L6.5 8 L11 7 L15.5 4.5 M3 8 L6 4.5 L11 3.2 L15.5 1.5" fill="none" stroke="#8f8f8f" stroke-width="1.1"/></svg>
<div class="t" style="left:796px;top:698.85px;font-size:14px;color:#222;transform:scaleX(0.9794);">Stacked trend</div>
<svg style="left:886px;top:702px" width="10" height="7" viewBox="0 0 10 7"><path d="M0 6 H9 L4.5 0.5 Z" fill="#8a8a8a"/></svg>
<div class="r" style="left:912.3px;top:690px;width:102px;height:31.7px;background:#fff;border:1px solid #dcdcdc;border-radius:3px;"></div>
<div class="r" style="left:983px;top:690.5px;width:1px;height:30.799999999999955px;background:#dcdcdc"></div>
<div class="t" style="left:925px;top:698.85px;font-size:14px;color:#222;transform:scaleX(0.9788);">8 hours</div>
<svg style="left:992px;top:697px" width="13" height="17" viewBox="0 0 13 17"><path d="M3.3 7 V4.3 A3.2 3.2 0 0 1 9.7 4.3" fill="none" stroke="#333" stroke-width="1.4"/><rect x="1.2" y="7" width="10.6" height="9" rx="1" fill="none" stroke="#333" stroke-width="1.4"/><rect x="5.8" y="10" width="1.4" height="3" fill="#333"/></svg>
<div class="r" style="left:1019.3px;top:690px;width:31.5px;height:31.7px;background:#fff;border:1px solid #ececec;border-radius:3px;"></div>
<svg style="left:1027px;top:698px" width="16" height="16" viewBox="0 0 16 16"><path d="M3 8 A5.5 5.5 0 1 0 4.6 4" fill="none" stroke="#cfcfcf" stroke-width="1.3"/><path d="M1.6 3 L4.9 3.9 L4.2 0.8" fill="none" stroke="#cfcfcf" stroke-width="1.2"/><path d="M8.5 5 V8.5 H11" fill="none" stroke="#cfcfcf" stroke-width="1.3"/></svg>
<div class="r" style="left:1216px;top:690px;width:31.7px;height:31.7px;background:#fff;border:1px solid #dcdcdc;border-radius:3px;"></div>
<svg style="left:1224px;top:697px" width="16" height="17" viewBox="0 0 16 17"><rect x="1" y="2.3" width="14" height="13" rx="1" fill="none" stroke="#8f8f8f" stroke-width="1.3"/><path d="M1 5.6 H15 M4.5 0.5 V3.5 M11.5 0.5 V3.5" stroke="#8f8f8f" stroke-width="1.3"/><rect x="9.5" y="10" width="3.5" height="3" fill="#8f8f8f"/></svg>
<div class="r" style="left:1252.3px;top:690px;width:33.4px;height:31.7px;background:#fff;border:1px solid #dcdcdc;border-radius:3px;"></div>
<svg style="left:1261px;top:698px" width="16" height="16" viewBox="0 0 16 16"><circle cx="8" cy="8" r="7" fill="none" stroke="#8f8f8f" stroke-width="1.3"/><path d="M8 3.6 V8.3 H11.8" fill="none" stroke="#8f8f8f" stroke-width="1.3"/></svg>
<div class="r" style="left:1290px;top:690px;width:31.7px;height:31.7px;background:#fff;border:1px solid #dcdcdc;border-radius:3px;"></div>
<svg style="left:1303px;top:702px" width="6" height="8" viewBox="0 0 6 8"><path d="M0.5 0 V7.5 L5 3.75 Z" fill="#333"/></svg>
<svg style="left:0;top:0" width="1380" height="900" viewBox="0 0 1380 900"><rect x="491.5" y="759" width="826.5" height="13" fill="#2260bf"/><path d="M491.5 758 L492.8 734.9 L494.6 756.3 L496.0 735.1 L497.0 756.6 L498.5 736.6 L499.4 755.5 L500.3 736.7 L501.8 754.2 L503.7 737.8 L505.2 757.1 L506.2 731.1 L507.6 754.3 L508.6 732.7 L509.4 756.3 L510.7 736.9 L512.1 757.2 L513.4 735.6 L514.7 755.4 L516.6 738.0 L518.4 757.5 L519.5 732.6 L520.6 754.4 L522.3 733.8 L524.0 755.9 L525.9 736.9 L526.7 755.0 L528.5 734.3 L530.3 756.0 L531.2 735.4 L532.9 755.3 L533.8 733.3 L535.6 757.8 L536.6 732.7 L537.5 754.3 L539.1 732.2 L540.6 756.2 L541.6 736.1 L542.5 757.2 L543.4 733.9 L544.5 755.3 L546.3 736.6 L547.5 758.4 L548.5 733.8 L550.3 757.2 L551.2 737.9 L552.2 755.3 L553.8 733.3 L555.0 754.4 L555.9 735.1 L556.9 757.0 L558.1 734.2 L560.0 756.4 L561.4 737.1 L562.4 754.8 L564.2 736.7 L565.3 754.9 L566.9 737.6 L567.9 758.8 L569.7 735.2 L571.0 754.5 L571.8 737.7 L572.9 757.5 L574.0 736.8 L575.4 755.5 L576.4 736.0 L577.3 755.1 L578.7 737.0 L580.2 755.4 L582.0 732.4 L582.8 755.3 L584.1 731.4 L585.1 755.8 L586.5 731.9 L587.7 758.5 L589.6 735.6 L591.2 756.9 L592.1 731.2 L592.9 758.6 L594.5 737.7 L595.3 757.2 L596.7 736.1 L597.8 759.0 L598.7 734.8 L600.3 758.5 L601.9 735.9 L603.6 758.6 L604.8 735.8 L606.6 758.4 L607.8 736.5 L609.6 756.9 L611.1 733.7 L612.5 757.0 L613.4 735.5 L615.3 758.4 L616.9 733.7 L618.5 756.9 L619.8 736.9 L620.7 757.8 L621.5 735.2 L622.8 755.2 L624.4 734.5 L625.9 758.6 L627.0 731.1 L628.1 757.4 L629.1 732.2 L630.9 757.3 L632.2 737.2 L633.3 757.3 L634.4 734.0 L636.1 758.6 L637.8 733.7 L639.3 755.6 L640.2 734.5 L641.9 758.2 L643.5 737.7 L644.6 754.8 L645.9 732.9 L646.9 756.1 L648.4 734.5 L649.6 758.2 L651.5 734.2 L652.3 754.2 L654.1 731.3 L655.7 756.9 L656.8 736.5 L657.6 754.7 L658.9 731.2 L660.7 755.2 L661.6 731.3 L663.1 756.2 L664.6 735.6 L666.3 758.8 L667.8 732.4 L669.2 754.9 L670.0 734.3 L671.6 754.9 L672.7 733.4 L674.2 756.6 L675.7 736.3 L676.9 758.0 L678.7 731.6 L680.6 757.6 L681.5 734.2 L683.0 758.5 L684.2 735.0 L686.0 758.0 L687.8 734.2 L689.3 755.0 L690.9 736.7 L692.4 757.6 L693.5 737.3 L695.3 758.9 L696.7 736.5 L697.9 758.5 L699.6 733.4 L700.5 756.2 L701.9 736.4 L703.3 754.1 L704.9 731.4 L706.6 754.9 L707.8 736.5 L708.8 754.7 L710.1 736.1 L711.8 757.4 L713.7 734.4 L715.5 754.4 L716.6 734.7 L717.7 757.6 L719.2 734.7 L720.9 756.8 L722.1 733.7 L723.8 758.5 L724.8 737.0 L726.7 756.6 L728.1 732.4 L729.5 756.5 L731.0 731.2 L732.8 756.6 L734.1 736.6 L735.5 756.5 L737.1 731.5 L738.5 756.1 L740.3 737.5 L741.4 756.4 L742.3 734.0 L744.0 758.5 L745.4 733.2 L746.4 757.1 L748.2 731.9 L749.8 754.1 L750.9 732.6 L752.4 755.6 L753.6 735.3 L754.5 757.7 L755.5 734.6 L756.5 755.0 L757.9 734.1 L759.1 756.1 L760.5 732.1 L761.5 757.2 L763.0 734.7 L764.8 757.1 L766.5 732.6 L768.1 758.1 L769.9 733.2 L771.1 758.6 L772.1 738.0 L773.9 754.7 L775.0 736.1 L776.0 754.5 L777.8 734.0 L779.4 754.6 L780.7 735.8 L781.5 755.0 L783.0 737.4 L784.9 754.6 L786.3 736.3 L787.6 757.4 L788.6 731.5 L789.5 754.2 L790.9 734.6 L792.4 754.7 L793.4 732.4 L795.1 759.0 L796.9 731.7 L797.8 758.8 L799.1 736.4 L800.2 756.3 L801.6 734.0 L803.1 754.1 L804.6 736.9 L805.6 756.3 L807.3 733.8 L808.3 754.8 L809.6 731.1 L811.4 758.0 L813.0 737.0 L814.5 756.0 L815.9 734.5 L817.8 758.0 L818.9 737.4 L820.5 757.9 L822.2 733.8 L824.0 758.4 L825.6 736.4 L827.2 756.0 L828.8 731.5 L830.0 756.3 L830.8 733.5 L832.3 757.1 L833.4 737.6 L834.9 755.7 L836.4 735.0 L837.8 755.9 L839.7 735.5 L841.3 757.8 L843.2 731.2 L844.6 757.7 L845.7 733.8 L846.6 755.0 L847.8 731.7 L848.9 758.5 L850.3 734.6 L852.1 756.8 L854.0 735.5 L855.7 754.4 L857.2 736.3 L858.0 758.7 L859.0 734.3 L860.0 756.5 L861.5 731.4 L863.3 756.1 L864.7 735.2 L865.9 755.4 L867.4 734.9 L868.5 757.6 L869.6 731.1 L870.7 754.2 L871.7 736.3 L872.9 758.5 L874.5 731.4 L876.4 758.7 L877.3 737.3 L878.6 756.4 L880.4 732.7 L881.8 758.7 L883.4 734.3 L885.3 758.1 L886.8 731.8 L888.2 756.3 L889.3 731.4 L890.6 754.6 L891.9 735.7 L893.2 755.3 L894.7 733.9 L896.3 756.7 L898.2 737.7 L899.8 755.2 L900.8 737.2 L902.4 757.1 L903.6 732.9 L905.2 756.8 L906.6 735.4 L908.2 754.9 L909.3 737.9 L911.1 758.4 L912.0 731.4 L913.1 756.1 L914.6 731.7 L916.0 754.4 L916.8 735.7 L918.3 757.2 L919.5 734.3 L920.5 755.7 L922.1 736.9 L923.0 754.6 L924.7 735.4 L926.3 755.1 L927.6 732.8 L929.3 755.8 L930.8 737.9 L932.0 756.7 L933.6 737.4 L934.9 755.8 L935.8 737.1 L936.7 754.4 L938.1 734.4 L939.6 755.5 L941.3 731.5 L942.3 757.3 L943.2 733.1 L944.8 757.5 L945.9 732.0 L947.1 757.6 L948.3 731.8 L949.9 756.8 L951.7 737.6 L953.5 756.2 L955.2 733.1 L956.3 756.0 L958.2 737.3 L959.2 755.8 L960.4 733.5 L961.7 755.9 L962.7 734.9 L964.4 756.7 L966.1 734.9 L967.1 757.8 L968.9 733.0 L969.7 756.6 L971.1 735.0 L972.9 757.3 L974.6 731.4 L976.0 757.9 L976.9 731.6 L978.5 758.5 L979.4 735.4 L980.4 757.7 L981.9 732.7 L982.9 757.8 L984.3 736.4 L985.5 755.7 L987.4 735.7 L988.7 756.7 L990.3 736.0 L992.1 756.1 L993.9 735.7 L995.6 758.0 L997.3 737.2 L999.2 757.2 L1000.5 736.0 L1002.2 756.1 L1003.5 732.0 L1005.1 759.0 L1006.3 732.2 L1007.3 756.1 L1008.5 737.8 L1009.3 755.5 L1010.3 735.5 L1011.9 754.9 L1012.8 734.2 L1014.2 758.5 L1015.1 731.8 L1016.1 755.1 L1017.1 736.0 L1018.6 755.1 L1019.6 733.0 L1020.6 757.8 L1021.7 734.8 L1023.4 756.4 L1024.5 737.2 L1026.3 755.7 L1027.7 737.7 L1029.0 755.1 L1029.9 737.6 L1031.6 755.9 L1033.0 734.6 L1034.1 759.0 L1035.6 732.7 L1036.4 756.4 L1037.6 736.6 L1039.2 757.0 L1040.2 732.1 L1041.3 755.3 L1043.1 734.6 L1044.6 759.0 L1045.7 734.7 L1046.6 757.9 L1047.4 736.7 L1049.2 758.1 L1050.0 732.9 L1051.6 754.5 L1053.0 734.3 L1054.8 756.9 L1056.6 733.1 L1058.2 756.1 L1060.0 731.6 L1061.7 755.0 L1063.1 734.7 L1064.1 758.2 L1065.3 733.2 L1066.1 755.5 L1067.5 736.0 L1068.7 757.4 L1069.6 733.8 L1070.9 758.8 L1072.6 735.6 L1073.4 755.9 L1075.0 732.7 L1076.4 756.3 L1077.2 737.9 L1078.9 755.0 L1080.4 733.0 L1081.6 756.7 L1082.7 733.4 L1083.9 757.3 L1085.0 732.4 L1086.6 755.6 L1088.5 734.9 L1090.1 755.7 L1091.8 731.6 L1092.7 754.5 L1094.3 736.0 L1095.3 756.0 L1097.0 735.1 L1097.9 755.1 L1098.9 731.9 L1100.1 754.4 L1101.9 734.0 L1103.3 757.2 L1104.9 736.7 L1106.2 755.7 L1107.4 731.1 L1108.7 757.5 L1110.5 736.5 L1112.1 757.0 L1112.9 733.3 L1114.1 757.3 L1115.0 733.6 L1116.3 757.9 L1118.0 735.3 L1119.0 757.8 L1120.8 734.8 L1122.0 756.5 L1123.0 736.0 L1124.8 756.6 L1126.4 736.8 L1127.4 758.7 L1128.9 732.4 L1129.8 755.2 L1131.3 735.9 L1132.4 758.6 L1133.6 734.2 L1134.6 758.9 L1135.5 737.3 L1136.9 756.8 L1138.3 732.9 L1140.1 759.0 L1141.8 735.2 L1142.8 758.1 L1143.9 737.3 L1144.9 756.9 L1146.6 732.3 L1148.0 754.4 L1148.9 732.3 L1150.8 758.7 L1152.3 733.2 L1153.8 757.7 L1155.1 735.1 L1156.7 754.1 L1157.8 734.3 L1158.7 755.9 L1160.1 732.2 L1161.5 755.3 L1162.9 733.3 L1164.4 754.2 L1166.0 732.0 L1167.8 757.0 L1169.2 733.9 L1170.6 757.4 L1172.3 736.3 L1173.6 759.0 L1175.3 737.0 L1176.6 756.2 L1178.0 737.3 L1179.4 756.6 L1180.7 737.3 L1181.8 754.3 L1183.4 737.3 L1185.0 757.0 L1186.6 733.1 L1188.1 754.3 L1189.0 734.1 L1190.4 756.0 L1191.2 735.9 L1192.6 755.2 L1193.8 733.8 L1194.8 754.3 L1196.6 737.8 L1198.1 758.3 L1199.4 736.6 L1200.5 757.7 L1201.9 737.3 L1202.8 758.0 L1203.7 734.8 L1205.6 754.0 L1206.6 733.1 L1207.8 754.3 L1209.6 736.7 L1210.8 755.8 L1212.3 731.3 L1213.1 758.5 L1214.2 734.5 L1216.1 758.9 L1217.4 732.4 L1218.5 758.6 L1220.3 732.4 L1222.0 755.8 L1223.3 732.2 L1225.1 759.0 L1226.1 735.4 L1227.1 758.4 L1228.0 731.7 L1229.6 755.6 L1231.4 737.1 L1233.0 754.7 L1234.5 737.6 L1235.8 754.4 L1236.9 733.2 L1238.4 755.0 L1239.4 732.6 L1241.0 758.0 L1242.2 735.6 L1244.0 756.9 L1245.0 733.1 L1246.8 757.3 L1247.9 735.5 L1248.8 758.9 L1250.1 734.7 L1251.5 754.2 L1253.0 733.0 L1254.0 758.0 L1254.9 733.0 L1256.6 755.2 L1257.7 734.8 L1258.7 758.5 L1260.6 731.2 L1261.9 757.8 L1263.1 737.5 L1264.4 754.9 L1265.9 735.5 L1267.1 757.3 L1268.7 734.6 L1270.1 758.2 L1271.6 734.6 L1273.5 754.9 L1275.1 732.2 L1276.6 755.2 L1277.9 736.4 L1279.5 758.0 L1280.6 734.4 L1281.6 756.9 L1283.0 731.2 L1284.5 757.6 L1285.9 737.1 L1286.9 754.8 L1287.7 734.5 L1289.0 756.2 L1290.1 736.6 L1290.9 758.5 L1292.4 734.8 L1294.0 755.2 L1295.0 733.2 L1295.9 755.6 L1297.3 734.7 L1298.4 756.9 L1299.3 736.7 L1300.3 755.3 L1301.3 735.8 L1303.0 757.9 L1303.9 733.9 L1305.1 755.1 L1306.9 731.3 L1308.3 757.8 L1310.2 732.0 L1311.5 757.7 L1312.3 732.7 L1314.1 754.7 L1315.3 733.1 L1316.0 754.4" fill="none" stroke="#cd5a4c" stroke-width="1.0"/><path d="M491.5 758 V730.5 H495.1 V758 H496.9 V730.5 H503.5 V758 H505.1 V730.5 H509.5 V758 H510.7 V730.5 H516.4 V758 H517.6 V730.5 H522.9 V758 H524.7 V730.5 H529.6 V758 H530.9 V730.5 H538.3 V758 H539.8 V730.5 H543.5 V758 H544.8 V730.5 H550.9 V758 H552.0 V730.5 H556.8 V758 H558.4 V730.5 H565.3 V758 H566.8 V730.5 H573.9 V758 H575.2 V730.5 H580.3 V758 H582.0 V730.5 H587.0 V758 H588.6 V730.5 H593.0 V758 H594.3 V730.5 H598.5 V758 H599.9 V730.5 H604.1 V758 H605.3 V730.5 H609.6 V758 H611.0 V730.5 H615.7 V758 H617.1 V730.5 H624.6 V758 H626.1 V730.5 H633.0 V758 H634.2 V730.5 H639.2 V758 H640.3 V730.5 H646.6 V758 H647.9 V730.5 H652.5 V758 H653.5 V730.5 H657.7 V758 H658.9 V730.5 H664.0 V758 H665.7 V730.5 H672.1 V758 H673.3 V730.5 H678.2 V758 H679.4 V730.5 H686.6 V758 H687.9 V730.5 H694.5 V758 H696.0 V730.5 H703.2 V758 H704.2 V730.5 H709.0 V758 H710.3 V730.5 H714.1 V758 H715.8 V730.5 H720.6 V758 H722.2 V730.5 H727.8 V758 H728.9 V730.5 H733.9 V758 H735.1 V730.5 H738.8 V758 H739.9 V730.5 H745.8 V758 H746.8 V730.5 H751.6 V758 H752.9 V730.5 H758.6 V758 H759.7 V730.5 H766.0 V758 H767.2 V730.5 H773.6 V758 H775.2 V730.5 H779.2 V758 H780.4 V730.5 H785.0 V758 H786.6 V730.5 H791.7 V758 H793.0 V730.5 H800.0 V758 H801.2 V730.5 H805.8 V758 H807.1 V730.5 H811.5 V758 H812.5 V730.5 H816.1 V758 H817.6 V730.5 H823.4 V758 H825.0 V730.5 H832.4 V758 H833.7 V730.5 H839.9 V758 H841.6 V730.5 H846.0 V758 H847.5 V730.5 H853.7 V758 H855.4 V730.5 H862.4 V758 H863.6 V730.5 H869.6 V758 H870.7 V730.5 H875.9 V758 H877.2 V730.5 H881.0 V758 H882.3 V730.5 H887.1 V758 H888.5 V730.5 H893.1 V758 H894.2 V730.5 H899.3 V758 H900.7 V730.5 H904.9 V758 H906.4 V730.5 H910.9 V758 H911.9 V730.5 H916.8 V758 H918.2 V730.5 H922.3 V758 H923.7 V730.5 H930.0 V758 H931.5 V730.5 H937.8 V758 H938.8 V730.5 H943.9 V758 H945.1 V730.5 H948.9 V758 H950.2 V730.5 H953.9 V758 H955.3 V730.5 H961.2 V758 H962.6 V730.5 H967.4 V758 H968.6 V730.5 H972.2 V758 H973.4 V730.5 H980.5 V758 H982.0 V730.5 H986.5 V758 H988.0 V730.5 H992.3 V758 H993.7 V730.5 H999.6 V758 H1001.4 V730.5 H1006.3 V758 H1007.8 V730.5 H1015.1 V758 H1016.7 V730.5 H1022.7 V758 H1024.2 V730.5 H1029.3 V758 H1030.7 V730.5 H1035.3 V758 H1036.9 V730.5 H1043.9 V758 H1045.3 V730.5 H1052.4 V758 H1053.4 V730.5 H1057.5 V758 H1058.9 V730.5 H1063.6 V758 H1064.9 V730.5 H1072.3 V758 H1073.4 V730.5 H1077.7 V758 H1078.9 V730.5 H1085.1 V758 H1086.3 V730.5 H1089.8 V758 H1091.2 V730.5 H1096.3 V758 H1097.5 V730.5 H1103.0 V758 H1104.5 V730.5 H1110.2 V758 H1111.7 V730.5 H1117.4 V758 H1119.1 V730.5 H1126.5 V758 H1127.7 V730.5 H1132.6 V758 H1134.3 V730.5 H1139.1 V758 H1140.6 V730.5 H1146.9 V758 H1148.5 V730.5 H1155.8 V758 H1157.5 V730.5 H1161.6 V758 H1163.1 V730.5 H1168.6 V758 H1170.0 V730.5 H1175.0 V758 H1176.2 V730.5 H1182.7 V758 H1184.2 V730.5 H1188.6 V758 H1189.8 V730.5 H1194.6 V758 H1195.8 V730.5 H1201.3 V758 H1202.4 V730.5 H1206.2 V758 H1207.2 V730.5 H1211.1 V758 H1212.7 V730.5 H1216.6 V758 H1218.0 V730.5 H1224.6 V758 H1226.0 V730.5 H1230.1 V758 H1231.8 V730.5 H1238.8 V758 H1239.8 V730.5 H1244.4 V758 H1245.8 V730.5 H1252.5 V758 H1253.8 V730.5 H1260.1 V758 H1261.3 V730.5 H1267.7 V758 H1269.0 V730.5 H1273.8 V758 H1275.4 V730.5 H1282.3 V758 H1283.9 V730.5 H1289.7 V758 H1291.0 V730.5 H1297.4 V758 H1298.9 V730.5 H1305.7 V758 H1307.3 V730.5 H1311.3 V758 H1312.6 V730.5 H1315" fill="none" stroke="#70b455" stroke-width="0.85"/><rect x="1317.5" y="729.5" width="4.5" height="43.5" rx="2.2" fill="#dfe6ee" stroke="#333" stroke-width="1"/><rect x="1317.5" y="737" width="4.5" height="18" rx="1.5" fill="#222"/><path d="M491.5 774.3 H1320 M492.0 774 V778 M1319.5 774 V778 M512.8 774 V778 M575.9 774 V778 M638.9 774 V778 M702.0 774 V778 M765.0 774 V778 M828.1 774 V778 M891.2 774 V778 M954.2 774 V778 M1017.3 774 V778 M1080.3 774 V778 M1143.4 774 V778 M1206.5 774 V778 M1269.5 774 V778" stroke="#777" stroke-width="1.3"/></svg>
<div class="t" style="left:497.59558984374996px;top:779.31px;font-size:10.5px;color:#333;transform:scaleX(0.9300);">17 Aug</div>
<div class="t" style="left:560.6555898437499px;top:779.31px;font-size:10.5px;color:#333;transform:scaleX(0.9300);">24 Aug</div>
<div class="t" style="left:623.71558984375px;top:779.31px;font-size:10.5px;color:#333;transform:scaleX(0.9300);">31 Aug</div>
<div class="t" style="left:689.2214171875px;top:779.31px;font-size:10.5px;color:#333;transform:scaleX(0.9300);">7 Sep</div>
<div class="t" style="left:749.5662894531249px;top:779.31px;font-size:10.5px;color:#333;transform:scaleX(0.9300);">14 Sep</div>
<div class="t" style="left:812.6262894531249px;top:779.31px;font-size:10.5px;color:#333;transform:scaleX(0.9300);">21 Sep</div>
<div class="t" style="left:875.6862894531249px;top:779.31px;font-size:10.5px;color:#333;transform:scaleX(0.9300);">28 Sep</div>
<div class="t" style="left:942.553113671875px;top:779.31px;font-size:10.5px;color:#333;transform:scaleX(0.9300);">5 Oct</div>
<div class="t" style="left:1002.8979859374999px;top:779.31px;font-size:10.5px;color:#333;transform:scaleX(0.9300);">12 Oct</div>
<div class="t" style="left:1065.9579859374999px;top:779.31px;font-size:10.5px;color:#333;transform:scaleX(0.9300);">19 Oct</div>
<div class="t" style="left:1129.0179859375px;top:779.31px;font-size:10.5px;color:#333;transform:scaleX(0.9300);">26 Oct</div>
<div class="t" style="left:1193.70599453125px;top:779.31px;font-size:10.5px;color:#333;transform:scaleX(0.9300);">2 Nov</div>
<div class="t" style="left:1256.76599453125px;top:779.31px;font-size:10.5px;color:#333;transform:scaleX(0.9300);">9 Nov</div>
<div class="r" style="left:492.3px;top:798.5px;width:243.2px;height:23px;background:#fff;border:1px solid #dcdcdc;border-radius:3px;"></div>
<div class="t" style="left:500.8607421875px;top:804.12px;font-size:12.5px;color:#222;">1D</div>
<div class="r" style="left:525.4px;top:799px;width:1px;height:22px;background:#dcdcdc"></div>
<div class="t" style="left:533.875px;top:804.12px;font-size:12.5px;color:#222;">1W</div>
<div class="r" style="left:561.1px;top:799px;width:1px;height:22px;background:#dcdcdc"></div>
<div class="t" style="left:569.9683593750001px;top:804.12px;font-size:12.5px;color:#222;">1M</div>
<div class="r" style="left:596.2px;top:799px;width:35.39999999999998px;height:22px;background:#eef3fa"></div>
<div class="r" style="left:596.2px;top:799px;width:1px;height:22px;background:#dcdcdc"></div>
<div class="t" style="left:605.2183593750001px;top:804.12px;font-size:12.5px;color:#1f5ab5;">3M</div>
<div class="r" style="left:631.6px;top:799px;width:1px;height:22px;background:#dcdcdc"></div>
<div class="t" style="left:640.4683593750001px;top:804.12px;font-size:12.5px;color:#222;">6M</div>
<div class="r" style="left:666.7px;top:799px;width:1px;height:22px;background:#dcdcdc"></div>
<div class="t" style="left:674.90546875px;top:804.12px;font-size:12.5px;color:#222;">1Y</div>
<div class="r" style="left:698.4px;top:799px;width:1px;height:22px;background:#dcdcdc"></div>
<div class="t" style="left:705.8298828125px;top:804.12px;font-size:12.5px;color:#222;">ALL</div>
<div class="r" style="left:752.5px;top:798.5px;width:103.2px;height:23px;background:#fff;border:1px solid #dcdcdc;border-radius:3px;"></div>
<div class="r" style="left:832.6px;top:799px;width:1px;height:22px;background:#dcdcdc"></div>
<div class="t" style="left:761.4px;top:804.12px;font-size:12.5px;color:#222;transform:scaleX(0.9289);">CUSTOM</div>
<svg style="left:816px;top:806px" width="8" height="6" viewBox="0 0 8 6"><path d="M0 5.5 H7.5 L3.75 0.5 Z" fill="#8a8a8a"/></svg>
<svg style="left:837.5px;top:803px" width="13" height="13" viewBox="0 0 13 13"><rect x="0.7" y="0.7" width="11.6" height="11.6" rx="1.5" fill="none" stroke="#777" stroke-width="1.1"/><path d="M3 5 V3 H5 M8 3 H10 V5 M10 8 V10 H8 M5 10 H3 V8" fill="none" stroke="#777" stroke-width="1.1"/></svg>
<svg style="left:0;top:0" width="1380" height="900" viewBox="0 0 1380 900"><rect x="117.3" y="476" width="296.5" height="41" fill="none" stroke="#7512f5" stroke-width="2.4" stroke-dasharray="10 5"/><rect x="245.3" y="602.8" width="30.4" height="22.8" fill="none" stroke="#7512f5" stroke-width="2.6" stroke-dasharray="8 4"/><rect x="245.3" y="685" width="30.4" height="22.8" fill="none" stroke="#7512f5" stroke-width="2.6" stroke-dasharray="8 4"/><path d="M641.8 497.6 H415" stroke="#7512f5" stroke-width="2.2"/><path d="M422.5 490.5 L414.5 497.6 L422.5 504.7" fill="none" stroke="#7512f5" stroke-width="2.1"/><path d="M416 644 L283 613.8" stroke="#7512f5" stroke-width="2.2"/><path d="M416 653 L283 695.3" stroke="#7512f5" stroke-width="2.2"/><path d="M289.2 621.2 L282.6 613.7 L291.8 609.8" fill="none" stroke="#7512f5" stroke-width="2.1"/><path d="M292.1 698.5 L282.6 695.4 L288.6 687.4" fill="none" stroke="#7512f5" stroke-width="2.1"/><rect x="642.4" y="483.3" width="252" height="29.3" rx="5" fill="#fff" stroke="#7512f5" stroke-width="2.4"/><rect x="416.6" y="630.2" width="259.2" height="29.6" rx="5" fill="#fff" stroke="#7512f5" stroke-width="2.4"/></svg>
<div class="t" style="left:677.4px;top:490.83px;font-size:15.8px;color:#7512f5;font-weight:bold;transform:scaleX(0.9329);">Select defined calculation</div>
<div class="t" style="left:435.4px;top:637.63px;font-size:15.8px;color:#7512f5;font-weight:bold;transform:scaleX(0.9300);">Calculated value for each result</div></body></html>
